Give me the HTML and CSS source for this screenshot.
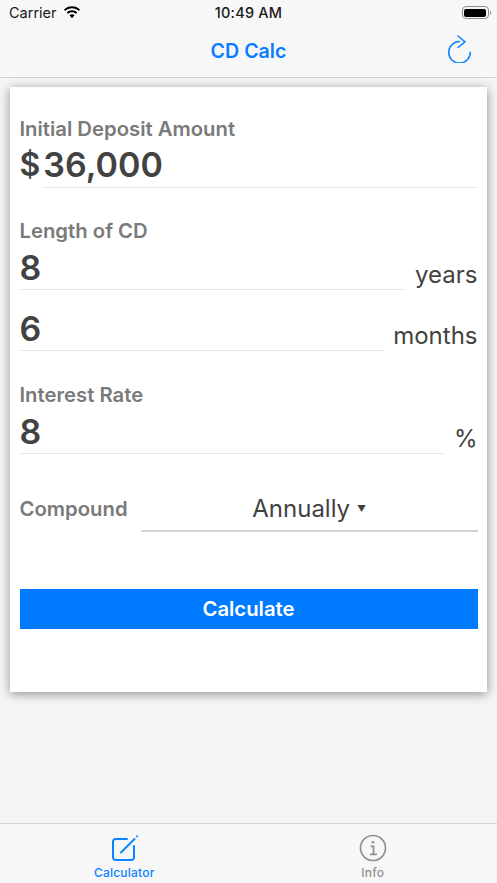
FILE: index.html
```html
<!DOCTYPE html>
<html lang="en">
<head>
<meta charset="utf-8">
<title>CD Calc</title>
<link rel="stylesheet" href="styles.css">
</head>
<body>
<div class="app">
  <header class="top">
    <div class="status">
      <div class="status-left">
        <span>Carrier</span>
        <svg class="wifi" viewBox="0 0 18 13" width="18" height="13"><path d="M9 2.200c2.600 0 5 1 6.800 2.700l1.200-1.300C14.900 1.500 12.100.3 9 .3S3.100 1.500 1 3.600l1.200 1.300C4 3.200 6.400 2.200 9 2.200z"/><path d="M9 6.200c1.500 0 2.900.6 4 1.500l1.300-1.300C12.900 5.100 11 4.300 9 4.300s-3.900.8-5.300 2.100L5 7.700c1.100-.9 2.500-1.500 4-1.500z"/><path d="M9 8.300c-1 0-1.800.4-2.500 1L9 12.200l2.500-2.900c-.7-.6-1.500-1-2.500-1z"/></svg>
      </div>
      <span class="clock">10:49 AM</span>
      <div class="battery"><div class="battery-body"><div class="battery-fill"></div></div><div class="battery-cap"></div></div>
    </div>
    <nav class="nav">
      <h1 class="title">CD Calc</h1>
      <svg class="refresh" viewBox="0 0 25 28" width="25" height="28" fill="none" stroke="#0a84ff" stroke-width="1.500" stroke-linecap="round" stroke-linejoin="round"><path d="M12.500 6.500a10.800 10.800 0 1 0 10.800 10.800"/><path d="M11 1l7 5.800-7 5.700"/></svg>
    </nav>
  </header>

  <main class="content">
    <section class="card">
      <div class="label label-first">Initial Deposit Amount</div>
      <div class="field field-amount">
        <span class="prefix">$</span>
        <span class="input">36,000</span>
      </div>

      <div class="label label-gap">Length of CD</div>
      <div class="field">
        <span class="input">8</span>
        <span class="unit">years</span>
      </div>
      <div class="field field-next">
        <span class="input">6</span>
        <span class="unit">months</span>
      </div>

      <div class="label label-gap">Interest Rate</div>
      <div class="field">
        <span class="input">8</span>
        <span class="unit">%</span>
      </div>

      <div class="compound">
        <span class="label">Compound</span>
        <div class="select"><span>Annually</span><span class="caret">▼</span></div>
      </div>

      <button class="calc" type="button">Calculate</button>
    </section>
  </main>

  <footer class="tabs">
    <div class="tab active">
      <svg viewBox="0 0 28 28" width="28" height="28" fill="none" stroke="#0a84ff" stroke-width="2" stroke-linecap="round"><path d="M17 5H5.500A2.500 2.500 0 0 0 3 7.500v16A2.500 2.500 0 0 0 5.500 26h16a2.500 2.500 0 0 0 2.500-2.500V12"/><path d="M11 18.500L24.500 5"/><circle cx="27" cy="2.300" r="1" fill="#0a84ff" stroke="none"/></svg>
      <span>Calculator</span>
    </div>
    <div class="tab">
      <svg viewBox="0 0 28 28" width="28" height="28" fill="none" stroke="#929292" stroke-width="1.700"><circle cx="14" cy="14" r="12.500"/><circle cx="14" cy="8.200" r="1.300" fill="#929292" stroke="none"/><path d="M11.500 12.300H14.500V20M11 20.300h7" stroke-width="1.800"/></svg>
      <span>Info</span>
    </div>
  </footer>
</div>
</body>
</html>
```

FILE: styles.css
```css
* { box-sizing: border-box; }
html, body { margin: 0; padding: 0; }
body {
  width: 497px;
  height: 883px;
  overflow: hidden;
  background: #f5f5f5;
  font-family: Inter, "Liberation Sans", sans-serif;
}
.app {
  display: flex;
  flex-direction: column;
  height: 883px;
}
.top {
  height: 78px;
  flex: none;
  background: #f7f7f7;
  border-bottom: 1px solid #d4d4d4;
}
.status {
  height: 25px;
  padding: 0 6px;
  display: grid;
  grid-template-columns: 1fr auto 1fr;
  align-items: center;
  font-size: 14.500px;
  color: #1a1a1a;
}
.status-left {
  display: flex;
  align-items: center;
  gap: 6px;
  margin-left: 3px;
}
.wifi { fill: #000; margin-top: -1px; }
.clock { font-weight: 500; letter-spacing: .2px; }
.battery {
  justify-self: end;
  display: flex;
  align-items: center;
}
.battery-body {
  width: 27px;
  height: 13px;
  border: 1px solid #8e8e8e;
  border-radius: 4px;
  padding: 1.500px;
}
.battery-fill {
  height: 100%;
  background: #000;
  border-radius: 2px;
}
.battery-cap {
  width: 1.500px;
  height: 4px;
  margin-left: 1px;
  background: #9a9a9a;
  border-radius: 0 1px 1px 0;
}
.nav {
  height: 52px;
  display: flex;
  align-items: center;
  justify-content: center;
  position: relative;
}
.title {
  margin: 0;
  font-size: 19.600px;
  font-weight: 600;
  color: #0a7cff;
}
.refresh {
  position: absolute;
  right: 25px;
  top: 10px;
}
.content {
  flex: 1;
  padding: 9px 10px 0;
}
.card {
  height: 605px;
  background: #fff;
  padding: 0 9.500px;
  box-shadow: 0 2px 10px rgba(0, 0, 0, .42);
}
.label {
  font-size: 20.300px;
  font-weight: 600;
  line-height: 24px;
  color: #7a7a7a;
}
.label-first { padding-top: 30px; height: 54px; }
.label-gap { margin-top: 32px; }
.field {
  display: flex;
  align-items: flex-end;
  gap: 9px;
  height: 47px;
}
.field-amount { gap: 3px; margin-bottom: -1px; }
.field-amount .input { padding-top: 3px; }
.field-next { margin-top: 14px; }
.prefix {
  font-size: 32px;
  font-weight: 600;
  line-height: 46px;
  color: #424242;
}
.input {
  flex: 1;
  height: 47px;
  padding-top: 4px;
  font-size: 34px;
  font-weight: 600;
  line-height: 42px;
  color: #424242;
  border-bottom: 1px solid #e8e8e8;
}
.unit {
  font-size: 24px;
  line-height: 30px;
  color: #424242;
}
.compound {
  display: flex;
  align-items: center;
  margin-top: 32px;
  height: 46px;
}
.compound .label { width: 121.500px; flex: none; }
.select {
  flex: 1;
  height: 46px;
  display: flex;
  align-items: center;
  justify-content: center;
  gap: 7px;
  font-size: 24px;
  color: #424242;
  border-bottom: 2px solid #d2d2d2;
}
.caret { font-size: 9px; }
.calc {
  display: block;
  width: 100%;
  height: 40px;
  margin-top: 57px;
  padding: 0 0 1px;
  border: 0;
  background: #007aff;
  color: #fff;
  font: 600 20.300px Inter, "Liberation Sans", sans-serif;
}
.tabs {
  height: 60px;
  flex: none;
  display: flex;
  background: #f7f7f7;
  border-top: 1px solid #d6d6d6;
}
.tab {
  flex: 1;
  display: flex;
  flex-direction: column;
  align-items: center;
  padding-top: 10px;
  gap: 3px;
  font-size: 12px;
  font-weight: 500;
  letter-spacing: .2px;
  color: #929292;
}
.tab.active { color: #0a84ff; }
```
